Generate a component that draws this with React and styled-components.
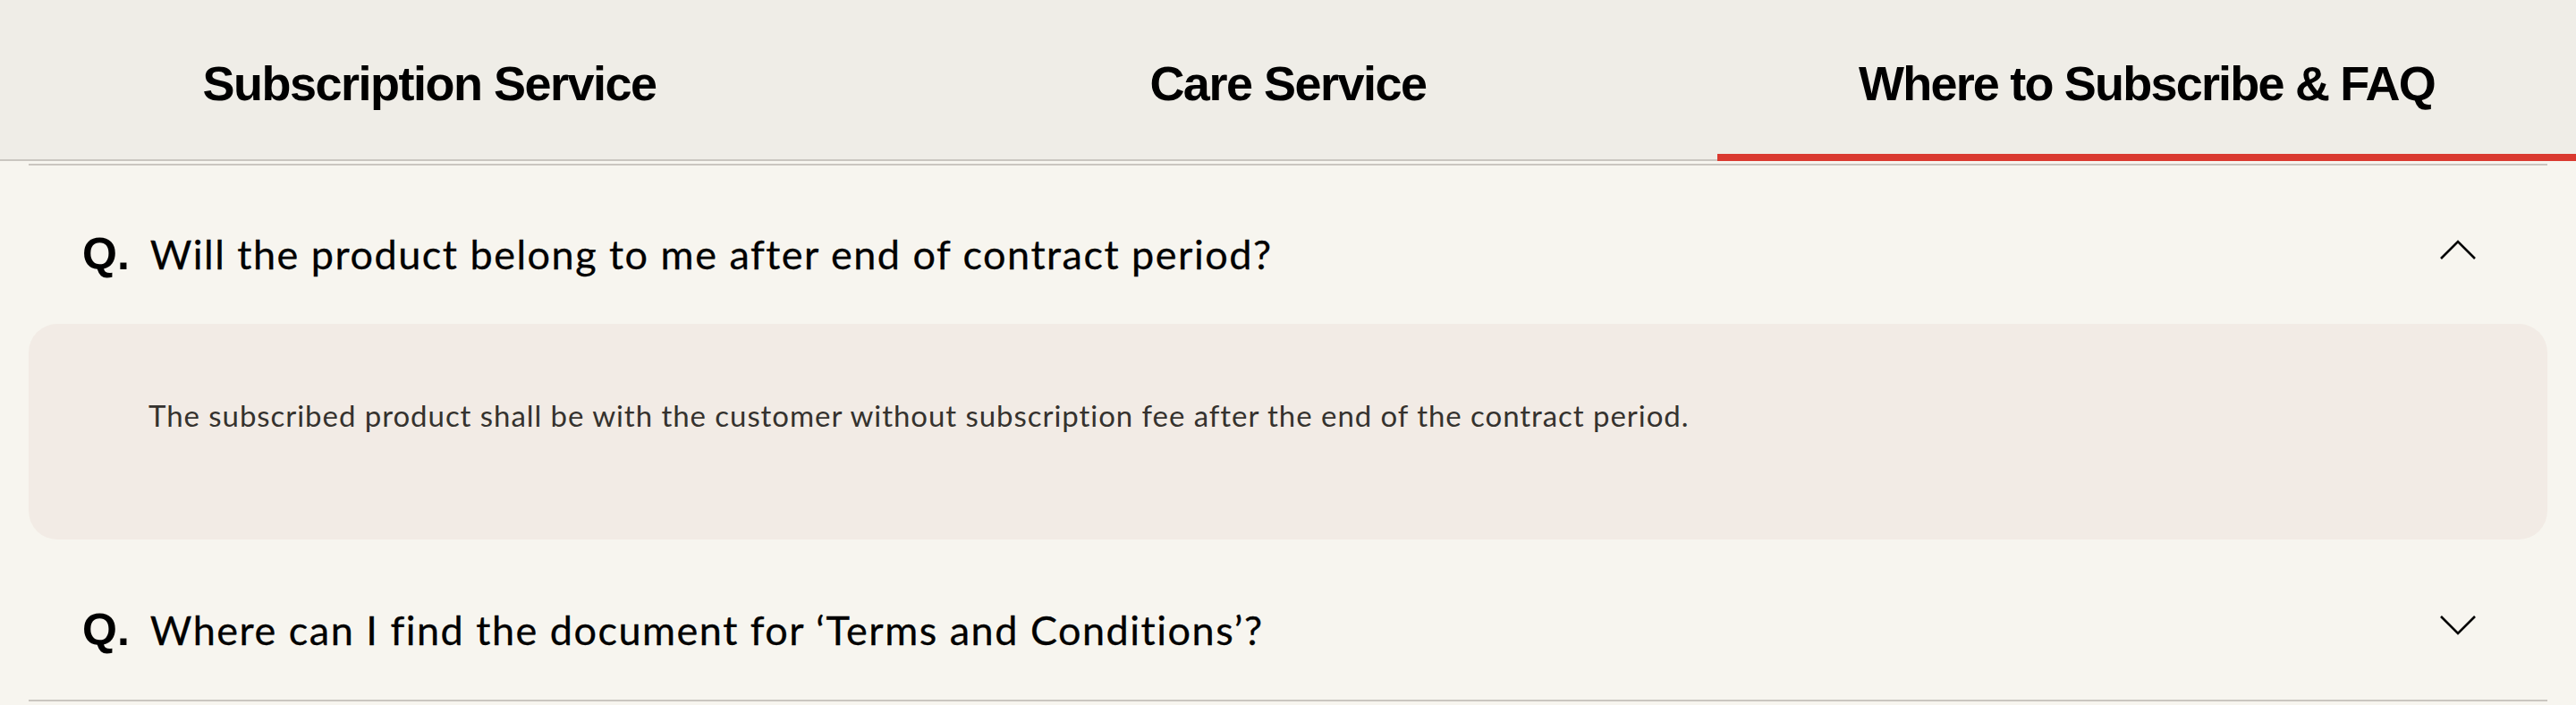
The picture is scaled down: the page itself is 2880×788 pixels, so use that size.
import styled, {createGlobalStyle} from 'styled-components';

const GlobalStyle = createGlobalStyle`
  html, body {
    margin: 0;
    padding: 0;
    background: #f7f5ef;
  }
  body {
    font-family: 'Lato', 'Noto Sans', sans-serif;
    color: #000;
  }
`;

const TabBar = styled.nav`
  display: grid;
  grid-template-columns: repeat(3, 1fr);
  background: #efede7;
  border-bottom: 2px solid #cac6c0;
`;

const Tab = styled.div`
  display: flex;
  align-items: center;
  justify-content: center;
  height: 180px;
  margin-bottom: -2px;
  padding-top: 5px;
  box-sizing: border-box;
  font-family: 'Liberation Sans', Arial, sans-serif;
  font-weight: 700;
  font-size: 54px;
  letter-spacing: ${(p) => (p.$active ? '-1.8px' : '-1.5px')};
  line-height: 54px;
  color: #000;
  box-shadow: ${(p) => (p.$active ? 'inset 0 -8px 0 #da3a30' : 'none')};
`;

const FaqWrap = styled.section`
  padding: 3px 32px 0;
`;

const FaqList = styled.ul`
  list-style: none;
  margin: 0;
  padding: 0;
  border-top: 2px solid #cac6c0;
`;

const Item = styled.li`
  border-bottom: ${(p) => (p.$open ? 'none' : '2px solid #cac6c0')};
`;

const Question = styled.div`
  display: flex;
  align-items: center;
  justify-content: space-between;
  padding: ${(p) => (p.$first ? '72px' : '74px')} 80px 51px 60px;
`;

const QuestionText = styled.div`
  display: flex;
  align-items: baseline;
`;

const QMark = styled.span`
  font-family: 'Liberation Sans', Arial, sans-serif;
  font-weight: 700;
  font-size: 50px;
  line-height: 54px;
  margin-right: 23px;
`;

const QLabel = styled.span`
  font-family: 'Lato', 'Noto Sans', sans-serif;
  font-weight: 400;
  font-size: 45px;
  line-height: 54px;
  letter-spacing: 1.5px;
  color: #000;
  -webkit-text-stroke: 0.3px #000;
`;

const Chevron = styled.svg`
  width: 40px;
  height: 22px;
  margin-bottom: 10px;
  flex-shrink: 0;
`;

const Answer = styled.div`
  background: #f2ebe5;
  border-radius: 32px;
  padding: 78px 134px 115px 134px;
  font-family: 'Lato', 'Noto Sans', sans-serif;
  font-size: 33px;
  line-height: 48px;
  letter-spacing: 0.95px;
  color: #35322e;
`;

const faqs = [
  {
    q: 'Will the product belong to me after end of contract period?',
    a: 'The subscribed product shall be with the customer without subscription fee after the end of the contract period.',
    open: true,
  },
  {
    q: 'Where can I find the document for \u2018Terms and Conditions\u2019?',
    open: false,
  },
];

const ArrowIcon = ({up}) => (
  <Chevron viewBox="0 0 40 22" fill="none">
    <polyline
      points={up ? '1,21 20,2 39,21' : '1,1 20,20 39,1'}
      stroke="#000"
      strokeWidth="2.6"
    />
  </Chevron>
);

export default function App() {
  return (
    <>
      <GlobalStyle />
      <TabBar>
        <Tab>Subscription Service</Tab>
        <Tab>Care Service</Tab>
        <Tab $active>Where to Subscribe &amp; FAQ</Tab>
      </TabBar>
      <FaqWrap>
        <FaqList>
          {faqs.map((f, i) => (
            <Item key={i} $open={f.open}>
              <Question $first={i === 0}>
                <QuestionText>
                  <QMark>Q.</QMark>
                  <QLabel>{f.q}</QLabel>
                </QuestionText>
                <ArrowIcon up={f.open} />
              </Question>
              {f.open && <Answer>{f.a}</Answer>}
            </Item>
          ))}
        </FaqList>
      </FaqWrap>
    </>
  );
}
